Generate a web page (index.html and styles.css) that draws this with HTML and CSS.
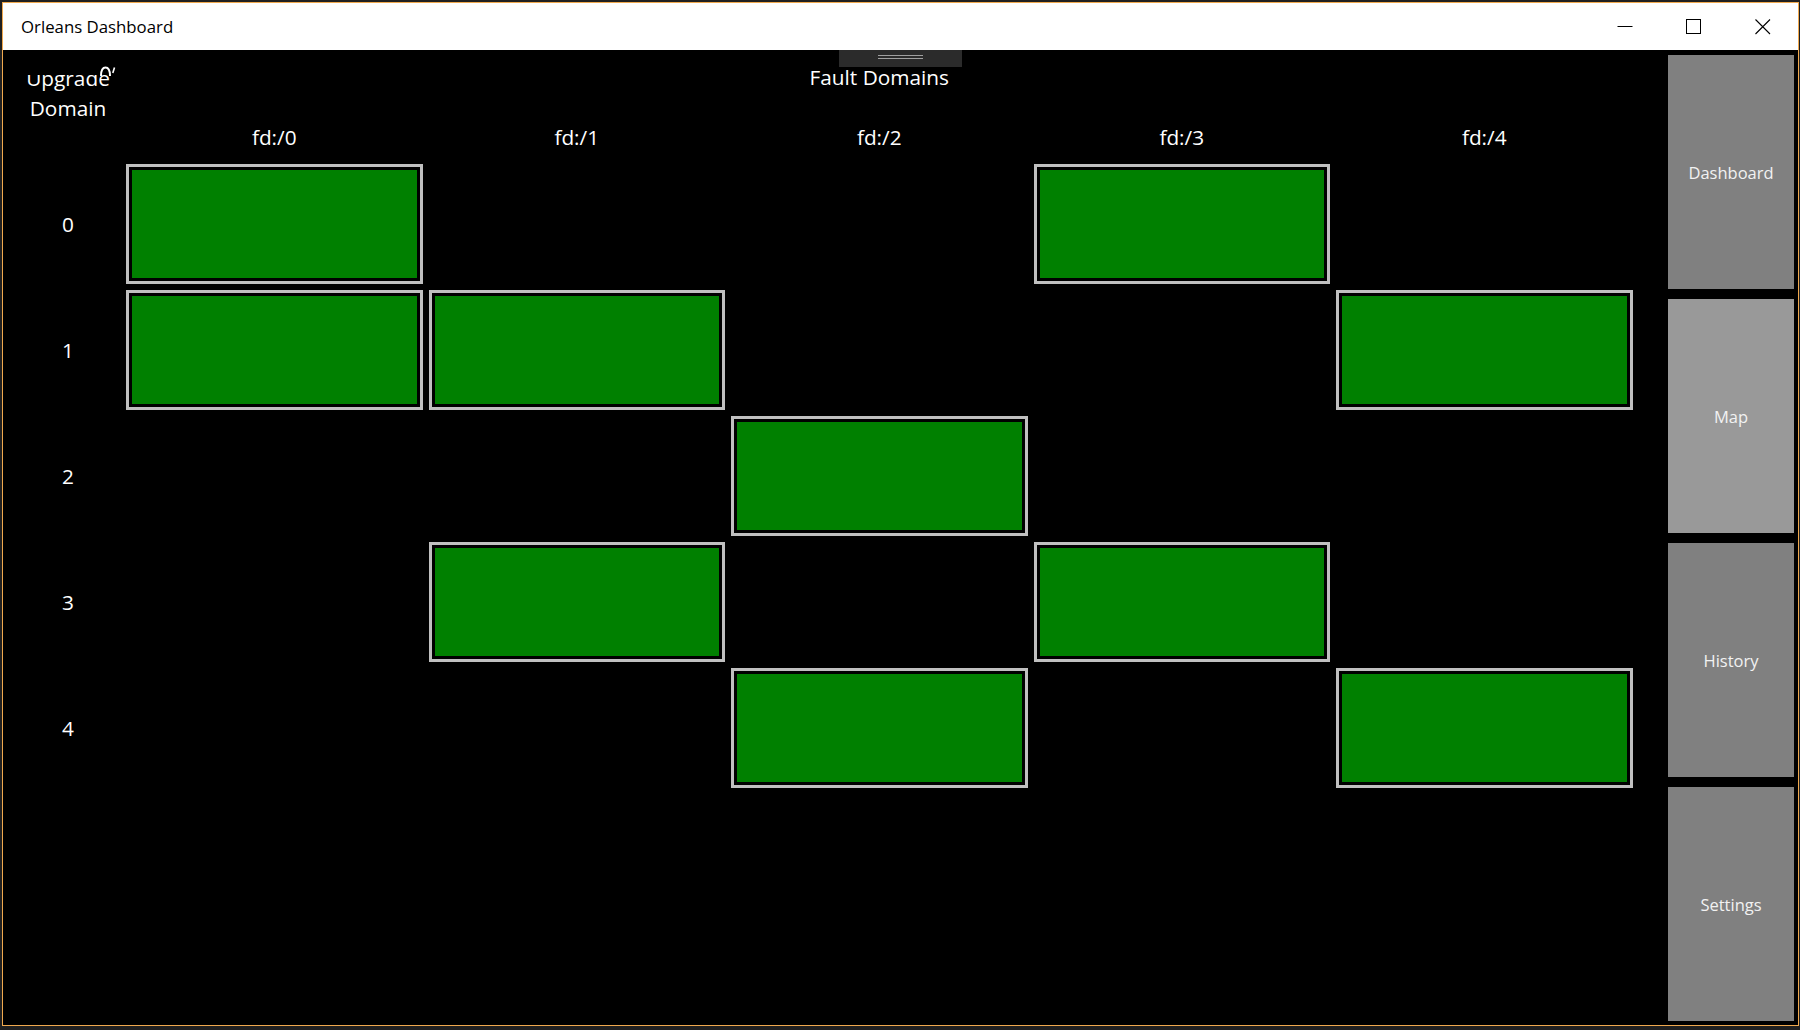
FILE: index.html
```html
<!DOCTYPE html>
<html>
<head>
<meta charset="utf-8">
<title>Orleans Dashboard</title>
<link rel="stylesheet" href="styles.css">
</head>
<body>
<div class="window">
  <div class="titlebar">
    <div class="title">Orleans Dashboard</div>
    <div class="controls">
      <div class="ctl"><svg width="16" height="16" viewBox="0 0 16 16"><line x1="0.5" y1="7.5" x2="15.5" y2="7.5" stroke="#000" stroke-width="1"/></svg></div>
      <div class="ctl"><svg width="16" height="16" viewBox="0 0 16 16"><rect x="0.5" y="0.5" width="14" height="14" fill="none" stroke="#000" stroke-width="1"/></svg></div>
      <div class="ctl"><svg width="16" height="16" viewBox="0 0 16 16"><path d="M0.5 0.5 L15 15 M15 0.5 L0.5 15" stroke="#000" stroke-width="1.1" fill="none"/></svg></div>
    </div>
  </div>
  <div class="content">
    <div class="handle"><span class="hl"></span><span class="hl"></span></div>
    <div class="main">
      <div class="ud-cell">
        <div class="ud-clip"><div class="ud-text">Upgrade<br>Domain</div></div>
        <svg class="artifact" width="18" height="11" viewBox="0 0 18 11"><path d="M2 10 C2 4 3.5 1.5 6.5 1.5 C9.5 1.5 11 4 11 10" stroke="#fff" stroke-width="2" fill="none"/><path d="M15.5 1.5 L13.8 7" stroke="#fff" stroke-width="1.6" fill="none"/></svg>
      </div>
      <div class="fault-title">Fault Domains</div>
      <div class="fd">fd:/0</div>
      <div class="fd">fd:/1</div>
      <div class="fd">fd:/2</div>
      <div class="fd">fd:/3</div>
      <div class="fd">fd:/4</div>

      <div class="rl">0</div>
      <div class="cell"><div class="box"></div></div>
      <div class="cell"></div>
      <div class="cell"></div>
      <div class="cell"><div class="box"></div></div>
      <div class="cell"></div>

      <div class="rl">1</div>
      <div class="cell"><div class="box"></div></div>
      <div class="cell"><div class="box"></div></div>
      <div class="cell"></div>
      <div class="cell"></div>
      <div class="cell"><div class="box"></div></div>

      <div class="rl">2</div>
      <div class="cell"></div>
      <div class="cell"></div>
      <div class="cell"><div class="box"></div></div>
      <div class="cell"></div>
      <div class="cell"></div>

      <div class="rl">3</div>
      <div class="cell"></div>
      <div class="cell"><div class="box"></div></div>
      <div class="cell"></div>
      <div class="cell"><div class="box"></div></div>
      <div class="cell"></div>

      <div class="rl">4</div>
      <div class="cell"></div>
      <div class="cell"></div>
      <div class="cell"><div class="box"></div></div>
      <div class="cell"></div>
      <div class="cell"><div class="box"></div></div>
    </div>
    <div class="nav">
      <div class="nav-btn">Dashboard</div>
      <div class="nav-btn active">Map</div>
      <div class="nav-btn">History</div>
      <div class="nav-btn">Settings</div>
    </div>
  </div>
</div>
</body>
</html>
```
FILE: styles.css
```css
html, body {
  margin: 0;
  padding: 0;
  background: #202020;
}
body {
  width: 1800px;
  height: 1030px;
  overflow: hidden;
  font-family: "Open Sans", "Noto Sans", sans-serif;
}
.window {
  margin: 2px 1px 4px 2px;
  width: 1795px;
  height: 1022px;
  border: 1px solid #f0a94e;
  display: flex;
  flex-direction: column;
  background: #000;
}
.titlebar {
  height: 47px;
  background: #fff;
  display: flex;
  align-items: center;
  justify-content: space-between;
  flex: none;
}
.title {
  padding-left: 18px;
  font-size: 16.8px;
  color: #000;
}
.controls {
  display: flex;
  height: 47px;
  margin-right: 1px;
}
.ctl {
  width: 69px;
  height: 47px;
  display: flex;
  align-items: center;
  justify-content: center;
}
.ctl svg {
  display: block;
}
.content {
  position: relative;
  flex: 1;
  display: flex;
  background: #000;
  color: #fff;
}
.handle {
  position: absolute;
  top: 0;
  left: 836px;
  width: 123px;
  height: 17px;
  background: #2b2b2b;
  display: flex;
  flex-direction: column;
  align-items: center;
  padding-top: 5px;
  box-sizing: border-box;
  gap: 2px;
}
.hl {
  display: block;
  width: 45px;
  height: 1px;
  background: #a0a0a0;
}
.main {
  flex: 1;
  padding-left: 10px;
  display: grid;
  grid-template-columns: 110px repeat(5, 302.5px);
  grid-template-rows: 54px 57px repeat(5, 126px);
  align-content: start;
  font-size: 20.8px;
}
.ud-cell {
  grid-row: 1 / 3;
  grid-column: 1;
  position: relative;
}
.ud-clip {
  margin-top: 25px;
  height: 60px;
  overflow: hidden;
  text-align: center;
}
.ud-text {
  margin-top: -11px;
  line-height: 29.5px;
}
.artifact {
  position: absolute;
  left: 86px;
  top: 16px;
}
.fault-title {
  grid-row: 1;
  grid-column: 2 / 7;
  display: flex;
  align-items: center;
  justify-content: center;
}
.fd {
  grid-row: 2;
  display: flex;
  justify-content: center;
  align-items: center;
  padding-top: 8px;
}
.rl {
  display: flex;
  align-items: center;
  justify-content: center;
}
.cell {
  padding: 3px;
  box-sizing: border-box;
}
.box {
  width: 100%;
  height: 100%;
  box-sizing: border-box;
  border: 3px solid #c0c0c0;
  background: #008000;
  box-shadow: inset 0 0 0 3px #000;
}
.nav {
  width: 126px;
  flex: none;
  display: flex;
  flex-direction: column;
  gap: 10px;
  padding: 5px 4px 4px 0;
}
.nav-btn {
  flex: 1;
  background: #808080;
  color: #f2f2f2;
  font-size: 16.5px;
  display: flex;
  align-items: center;
  justify-content: center;
}
.nav-btn.active {
  background: #999999;
}
```
